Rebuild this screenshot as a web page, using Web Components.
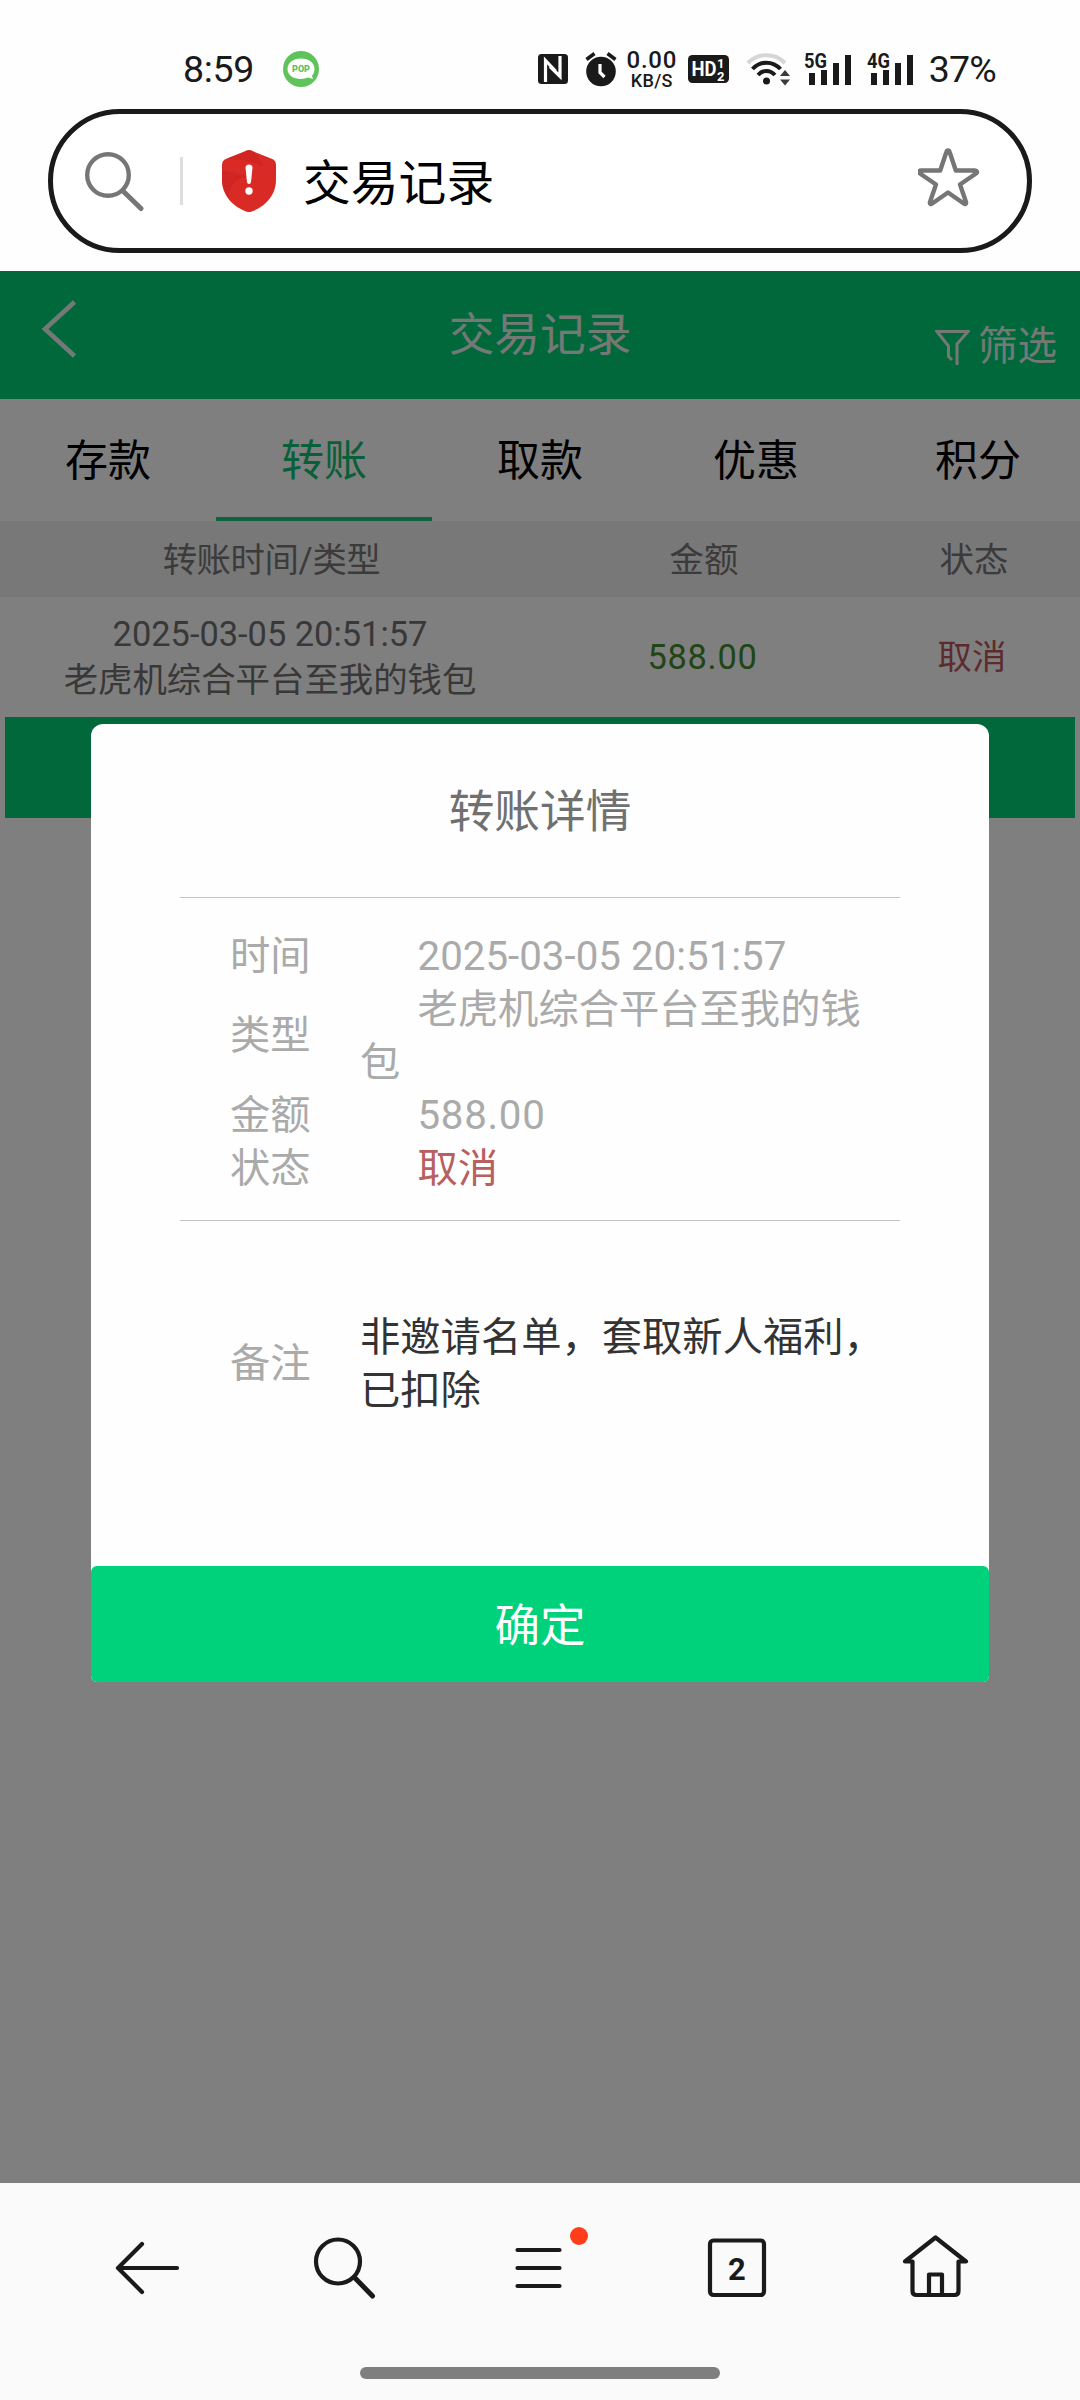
<!DOCTYPE html>
<html lang="zh-CN">
<head>
<meta charset="utf-8">
<meta name="viewport" content="width=1080">
<title>交易记录</title>
<style>
body{margin:0;background:#fff;font-family:Roboto,"Noto Sans CJK SC",sans-serif;color:#000}
.num{letter-spacing:.7px}
</style>
</head>
<body>
<phone-screen>
  <status-bar time="8:59" battery="37%"></status-bar>
  <address-bar>交易记录</address-bar>
  <page-view>
    <page-header heading="交易记录">筛选</page-header>
    <tab-strip>
      <tab-item>存款</tab-item><tab-item active>转账</tab-item><tab-item>取款</tab-item><tab-item>优惠</tab-item><tab-item last>积分</tab-item>
    </tab-strip>
    <record-row head><span slot="type">转账时间/类型</span><span slot="amount">金额</span><span slot="state">状态</span></record-row>
    <record-row><span slot="type">2025-03-05 20:51:57<br>老虎机综合平台至我的钱包</span><span slot="amount" class="num">588.00</span><span slot="state">取消</span></record-row>
    <load-more></load-more>
    <detail-dialog slot="dialog" heading="转账详情" action="确定">
      <detail-item label="时间">2025-03-05 20:51:57</detail-item>
      <detail-item label="类型">老虎机综合平台至我的钱包</detail-item>
      <detail-item label="金额"><span class="num">588.00</span></detail-item>
      <detail-item label="状态" danger>取消</detail-item>
      <detail-item slot="note" label="备注" note>非邀请名单，套取新人福利，已扣除</detail-item>
    </detail-dialog>
  </page-view>
  <nav-bar tabs="2"></nav-bar>
</phone-screen>

<script>
function define(name, render) {
  customElements.define(name, class extends HTMLElement {
    constructor() {
      super();
      this.attachShadow({ mode: 'open' });
    }
    connectedCallback() {
      this.shadowRoot.innerHTML = render(this);
    }
  });
}

define('phone-screen', () => `
<style>:host{display:flex;flex-direction:column;width:1080px;height:2400px;overflow:hidden;background:#fefefe}</style>
<slot></slot>`);

define('status-bar', el => `
<style>
:host{display:flex;justify-content:space-between;align-items:flex-start;box-sizing:border-box;height:109px;padding:48px 84px 0 183px;color:#1a1a1a}
.side{display:flex;align-items:center;height:42px}
.time{font-size:37.500px;line-height:42px;letter-spacing:-.3px}
.pop{margin-left:29px}
.speed{display:flex;flex-direction:column;align-items:center;width:54px;margin-left:8px;font-weight:500}
.speed b{font-weight:500;font-size:24px;line-height:23px;letter-spacing:.7px}
.speed i{font-style:normal;font-size:18px;line-height:17px;letter-spacing:.4px}
svg{display:block;flex:none}
.bat{font-size:37.500px;line-height:42px;margin-left:14px;letter-spacing:-.8px}
</style>
<div class="side"><span class="time">${el.getAttribute('time')}</span>
<svg class="pop" width="36" height="36" viewBox="0 0 36 36"><circle cx="18" cy="18" r="18" fill="#5fc35b"/><path d="M18 7.500c8 0 13.500 4.500 13.500 10.500 0 3-1 5.300-2.600 6.800L30 28l-5-1.400c-2 .8-4.300 1.400-7 1.400-8 0-13.500-4-13.500-10S10 7.500 18 7.500z" fill="#fff"/><text x="18" y="21.300" text-anchor="middle" font-size="9" font-weight="900" fill="#5fc35b" textLength="18" lengthAdjust="spacingAndGlyphs">POP</text></svg></div>
<div class="side">
<svg width="30" height="32" viewBox="0 0 30 32"><rect y="1" width="30" height="30" rx="3.500" fill="#1a1a1a"/><path d="M7.500 29V7.500L17.500 18M22 3v20.500L12 13.500" fill="none" stroke="#fff" stroke-width="3.200"/></svg>
<svg style="margin-left:17px" width="32" height="36" viewBox="0 0 32 36"><circle cx="16" cy="20.500" r="14.800" fill="#1a1a1a"/><path d="M1.500 8.500l8-6M30.500 8.500l-8-6" stroke="#1a1a1a" stroke-width="3.600"/><path d="M15 13v8.500l4.500 4.500" fill="none" stroke="#fff" stroke-width="3.200"/></svg>
<span class="speed"><b>0.00</b><i>KB/S</i></span>
<svg style="margin-left:9px" width="41" height="30" viewBox="0 0 41 30"><rect y="1" width="41" height="28" rx="4.500" fill="#1a1a1a"/><text x="3.500" y="22" font-size="20" font-weight="700" fill="#fff" textLength="25" lengthAdjust="spacingAndGlyphs">HD</text><text x="29" y="14" font-size="13" font-weight="700" fill="#fff">1</text><text x="29" y="26.500" font-size="13" font-weight="700" fill="#fff">2</text></svg>
<svg style="margin-left:17px" width="46" height="36" viewBox="0 0 46 36"><g fill="none" stroke-width="4"><path d="M2 12c10-10.500 27-10.500 37 0" stroke="#d6d6d6"/><path d="M6.500 18c8-8.500 20-8.500 28 0M12 24c5-5.500 12-5.500 17 0" stroke="#1a1a1a"/></g><circle cx="20.500" cy="30" r="3.500" fill="#1a1a1a"/><path d="M34 25h10l-5-6zM34 28.500h10l-5 6z" fill="#3a3a3a"/></svg>
<svg style="margin-left:12px" width="48" height="44" viewBox="0 -4 48 44"><text x="0" y="16.800" font-size="21" font-weight="700" fill="#1a1a1a" textLength="23" lengthAdjust="spacingAndGlyphs">5G</text><path d="M5 22h6v12H5zM17 19h6v15h-6zM29 12h6v22h-6zM41 4h6v30h-6z" fill="#1a1a1a"/></svg>
<svg style="margin-left:15px" width="48" height="44" viewBox="0 -4 48 44"><text x="0" y="16.800" font-size="21" font-weight="700" fill="#1a1a1a" textLength="23" lengthAdjust="spacingAndGlyphs">4G</text><path d="M4 22h6v12H4zM16 19h6v15h-6zM28 12h6v22h-6zM40 4h6v30h-6z" fill="#1a1a1a"/></svg>
<span class="bat">${el.getAttribute('battery')}</span></div>`);

define('address-bar', () => `
<style>
:host{display:block;height:162px;padding:0 48px;box-sizing:border-box}
.pill{display:flex;align-items:center;box-sizing:border-box;height:144px;border:5px solid #1a1a1a;border-radius:72px;padding:0 48px 0 31px;background:#fff}
.sep{width:3px;height:48px;margin:0 39px 0 35px;background:#ddd}
.text{flex:1;margin-left:27px;font-size:47.800px;line-height:60px;padding-top:5px}
svg{display:block;flex:none}
</style>
<div class="pill">
<svg width="61" height="62" viewBox="0 0 61 62"><g fill="none" stroke="#767676" stroke-linecap="round"><circle cx="24" cy="25" r="20.800" stroke-width="4.400"/><path d="M39.500 41.500L57 58.500" stroke-width="5"/></g></svg>
<span class="sep"></span>
<svg width="54" height="62" viewBox="0 0 54 62"><path d="M27 0c2 0 3.500 1 5 1.800L49 8.500c3.500 1.400 5 3 5 6.500v15c0 15-10.500 26-23 31-3 1.400-5 1.400-8 0C10.500 56 0 45 0 30V15c0-3.500 1.500-5.100 5-6.500L22 1.800C23.500 1 25 0 27 0z" fill="#d92a26"/><path d="M25 .4c3-.8 5 .6 7 1.400 3 3 7 10 9 15C32 10 16 10 5 8.500L22 1.800zM27 26C16 27 6 36 7 47 2 41 0 36 0 30V20z" fill="#c82020" opacity=".55"/><path d="M23.500 17.500c0-4 7-4 7 0L29 32c-.3 2.600-3.700 2.600-4 0z" fill="#fff"/><circle cx="27" cy="41" r="3.700" fill="#fff"/></svg>
<span class="text"><slot></slot></span>
<svg width="62" height="62" viewBox="0 0 62 62" style="margin:-9px -1px 0 0"><path d="M30 4.500c.7 0 1.300.5 1.500 1.200L37.800 24.500H57c2 0 2.700 1.800 1 3L42 38.500l6 17.500c.5 1.800-.8 2.500-2.200 1.500L30 46.500 14.200 57.500c-1.400 1-2.700.3-2.200-1.500l6-17.500L2 27.500c-1.700-1.200-1-3 1-3h19.200L28.500 5.700c.2-.7.800-1.200 1.500-1.200z" fill="none" stroke="#767676" stroke-width="4.400" stroke-linejoin="round"/></svg>
</div>`);

define('page-view', () => `
<style>
:host{display:block;position:relative;height:1912px;background:#fff}
.mask{position:absolute;inset:0;display:flex;justify-content:center;align-items:flex-start;padding-top:453px;box-sizing:border-box;background:rgba(0,0,0,.5)}
</style>
<slot></slot><div class="mask"><slot name="dialog"></slot></div>`);

define('page-header', el => `
<style>
:host{display:grid;grid-template-columns:1fr auto 1fr;height:128px;background:#00d177;color:#e8f3ec}
.back{margin-top:29px;display:block}
.title{font-size:45.700px;line-height:60px;margin-top:35px}
.filter{display:flex;justify-content:flex-end;gap:8px;font-size:39.500px;line-height:52px;padding:50px 23px 0 0}
.filter svg{display:block;margin-top:8px}
.left{padding-left:41px}
</style>
<div class="left"><svg class="back" width="36" height="58" viewBox="0 0 36 58"><path d="M33.500 2L4 29l29.500 27" fill="none" stroke="currentColor" stroke-width="4.600"/></svg></div>
<div class="title">${el.getAttribute('heading')}</div>
<div class="filter"><svg width="35" height="37" viewBox="0 0 35 37"><path d="M17 31l-3.500-3.500V17L2 2.500h31L22 15v21" fill="none" stroke="currentColor" stroke-width="3"/></svg><slot></slot></div>`);

define('tab-strip', () => `
<style>:host{display:grid;grid-template-columns:repeat(5,216px);height:122px;background:#fff}</style><slot></slot>`);

define('tab-item', () => `
<style>
:host{display:flex;justify-content:center;align-items:center;box-sizing:border-box;border-bottom:4px solid transparent;font-size:43px;line-height:60px;padding-top:5px}
:host([active]){color:#11bf73;border-bottom-color:#18c67c}
:host([last]){padding-left:12px}
</style><slot></slot>`);

define('record-row', () => `
<style>
:host{display:grid;grid-template-columns:540px 328px 212px;align-items:center;text-align:center;height:120px;font-size:34.400px;line-height:46px;color:#707070;background:#fff}
.a{color:#428a2e}.s{color:#b9585a}
:host([head]) .a,:host([head]) .s{color:inherit}
:host(:not([head])) .s{padding-right:4px}
:host(:not([head])) .a{padding-right:3px}
:host([head]){height:76px;padding-top:2px;box-sizing:border-box;background:#f0f0f0;color:#777}
:host([head]) .t{letter-spacing:-.4px;padding-left:3px}
</style>
<div class="t"><slot name="type"></slot></div><div class="a"><slot name="amount"></slot></div><div class="s"><slot name="state"></slot></div>`);

define('load-more', () => `
<style>:host{display:block;height:101px;margin:0 5px;background:#00d177}</style>`);

define('detail-dialog', el => `
<style>
:host{display:flex;flex-direction:column;width:898px;height:958px;border-radius:12px 12px 6px 6px;background:#fefefe}
h2{margin:0;height:173px;box-sizing:border-box;padding-top:59px;text-align:center;font-weight:400;font-size:45.700px;line-height:60px;color:#707070}
.list{margin:0 89px;height:324px;box-sizing:border-box;padding-top:31.500px;border:solid #c3c3c3;border-width:1px 0}
.note{margin:0 89px;padding-top:89.500px;flex:1}
button{display:block;width:100%;height:116px;border:0;padding:5px 0 0;border-radius:6px;background:#00d17b;color:#fff;font:400 45.500px/60px Roboto,"Noto Sans CJK SC",sans-serif}
</style>
<h2>${el.getAttribute('heading')}</h2>
<div class="list"><slot></slot></div>
<div class="note"><slot name="note"></slot></div>
<button>${el.getAttribute('action')}</button>`);

define('detail-item', el => `
<style>
:host{display:grid;grid-template-columns:180px 540px;align-items:center;font-size:40.300px;line-height:53.100px;color:#aaa}
.label{padding-left:50px}
.value{text-indent:57.500px}
:host([danger]) .value{color:#b85f60}
:host([note]) .value{text-indent:0;color:#333}
</style>
<div class="label">${el.getAttribute('label')}</div><div class="value"><slot></slot></div>`);

define('nav-bar', el => `
<style>
:host{display:flex;flex-direction:column;align-items:center;height:217px;background:#fafafa}
.row{display:grid;grid-template-columns:repeat(5,198px);justify-content:center;justify-items:center;align-items:center;height:170px;width:100%}
.cell{position:relative}
.dot{position:absolute;left:66px;top:-5px;width:18px;height:18px;border-radius:50%;background:#ff3f1c}
.home{width:360px;height:12px;border-radius:6px;background:#7f7f7f;margin-top:14px}
svg{display:block}
g{fill:none;stroke:#1a1a1a;stroke-width:4.200;stroke-linecap:round;stroke-linejoin:round}
</style>
<div class="row">
<div class="cell"><svg width="72" height="72" viewBox="0 0 72 72"><g transform="translate(4 0)"><path d="M6 36h59M30 12L6 36l24 24"/></g></svg></div>
<div class="cell"><svg width="72" height="72" viewBox="0 0 72 72"><g transform="translate(2.500 0)"><circle cx="29.500" cy="29.500" r="22"/><path d="M46 45.500L64 64" stroke-width="5"/></g></svg></div>
<div class="cell"><svg width="72" height="72" viewBox="0 0 72 72"><g><path d="M13.500 18h42M13.500 36h42M13.500 54h42"/></g></svg><span class="dot"></span></div>
<div class="cell"><svg width="72" height="72" viewBox="0 0 72 72"><g><rect x="8" y="8.500" width="54" height="54.500" rx="3.500"/></g><text x="35" y="47.500" text-anchor="middle" font-size="31" font-weight="700" fill="#1a1a1a">${el.getAttribute('tabs')}</text></svg></div>
<div class="cell"><svg width="72" height="72" viewBox="0 0 72 72"><g><path d="M12 29.500H5L35.500 5.500 66 29.500h-7.500V59q0 4-4 4H16.500q-4 0-4-4V29.500M29 63V42.500h13V63"/></g></svg></div>
</div>
<div class="home"></div>`);
</script>
</body>
</html>
